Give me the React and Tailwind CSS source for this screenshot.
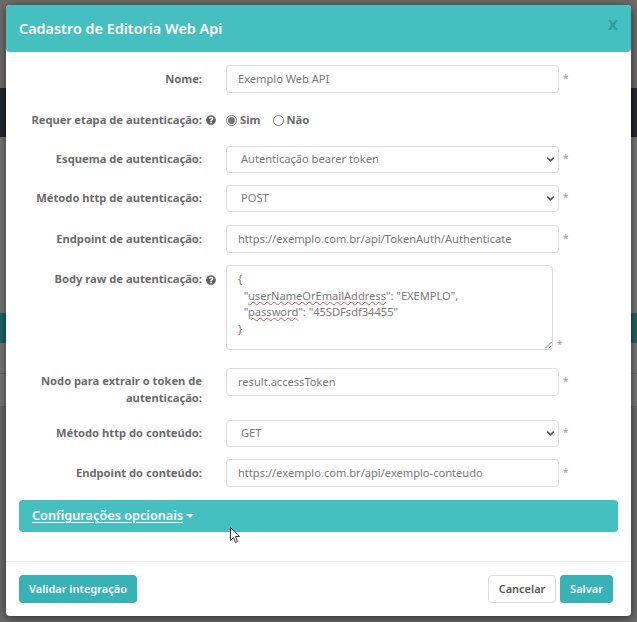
import { ChevronDown } from 'lucide-react';

const labelClass = 'w-[196px] shrink-0 text-right text-[11.2px] leading-[16.5px] font-bold text-[#6a6a6a]';
const fieldClass = 'h-[28px] w-[333px] rounded-[4px] border border-[#dcdcdc] bg-white text-[11.1px] text-[#777777] flex items-center';

function Help() {
  return (
    <svg className="w-[10px] h-[10px] shrink-0" viewBox="0 0 512 512" fill="#5f5f5f">
      <path d="M504 256c0 137-111 248-248 248S8 393 8 256 119 8 256 8s248 111 248 248zM262.700 90c-54.500 0-89.300 23-116.600 63.800-3.500 5.300-2.400 12.400 2.700 16.300l34.700 26.300c5.200 3.900 12.600 3 16.700-2.100 17.900-22.700 30.100-35.800 57.300-35.800 20.400 0 45.700 13.100 45.700 32.900 0 15-12.400 22.700-32.500 34C247.100 238.500 216 254.900 216 296v4c0 6.600 5.400 12 12 12h56c6.600 0 12-5.400 12-12v-1.300c0-28.500 83.200-29.700 83.200-106.700 0-58-60.200-102-116.500-102zM256 338c-25.400 0-46 20.600-46 46 0 25.400 20.600 46 46 46s46-20.600 46-46c0-25.400-20.600-46-46-46z" />
    </svg>
  );
}

function Star({ className = '' }) {
  return <span className={`text-[10px] leading-none text-[#999999] ml-[4px] mb-[3px] ${className}`}>*</span>;
}

function Row({ label, help, children, className = '' }) {
  return (
    <div className={`flex items-center ${className}`}>
      <div className={labelClass}>{label}</div>
      <div className="w-[24px] shrink-0 pl-[4px]">{help && <Help />}</div>
      {children}
    </div>
  );
}

function TextField({ value }) {
  return (
    <div className="flex items-center">
      <div className={`${fieldClass} pl-[11px]`}>{value}</div>
      <Star />
    </div>
  );
}

function SelectField({ value }) {
  return (
    <div className="flex items-center">
      <div className={`${fieldClass} !h-[27px] pl-[14px] pr-[2px] justify-between`}>
        <span>{value}</span>
        <ChevronDown size={11} strokeWidth={3.5} color="#555555" />
      </div>
      <Star />
    </div>
  );
}

function Squiggle({ children }) {
  return <span className="underline decoration-wavy decoration-[#d9534f] decoration-1 underline-offset-1">{children}</span>;
}

export default function App() {
  return (
    <div className="relative h-[622px] w-[637px] overflow-hidden bg-[#757575] font-['Noto_Sans','Open_Sans',sans-serif]">
      {/* page behind the backdrop */}
      <div className="flex flex-col">
        <div className="h-[88px] bg-[#6e6b6b]" />
        <div className="h-[49px] bg-[#23282c]" />
        <div className="h-[176px] bg-[#767676]" />
        <div className="h-[30px] bg-[#1c6460]" />
        <div className="h-[30px] bg-[#767676]" />
        <div className="h-[34px] border-y border-[#666666] bg-[#767676]" />
        <div className="h-[215px] bg-[#6a6a6a]" />
      </div>

      {/* modal */}
      <div className="absolute left-[6px] top-[5px] w-[625px] h-[611px] flex flex-col rounded-[4px] bg-white shadow-[0_2px_10px_rgba(0,0,0,0.55)]">
        <div className="relative h-[47px] shrink-0 rounded-[4px] bg-[#45bfc0] pl-[13px] flex items-center">
          <h1 className="text-[14.4px] font-semibold text-white">Cadastro de Editoria Web Api</h1>
          <span className="absolute right-[13px] top-[9px] text-[15px] leading-[20px] font-bold text-[#2f9a9c]">X</span>
        </div>

        <div className="flex flex-col flex-1 pt-[13px]">
          <Row label="Nome:">
            <TextField value="Exemplo Web API" />
          </Row>

          <Row label="Requer etapa de autenticação:" help className="mt-[20px] h-[14px]">
            <div className="flex items-center text-[11.2px] font-bold text-[#6a6a6a]">
              <span className="flex h-[11px] w-[11px] items-center justify-center rounded-full border border-[#777777]">
                <span className="h-[7px] w-[7px] rounded-full bg-[#777777]" />
              </span>
              <span className="ml-[3px]">Sim</span>
              <span className="ml-[13px] h-[11px] w-[11px] rounded-full border border-[#777777]" />
              <span className="ml-[2px]">Não</span>
            </div>
          </Row>

          <Row label="Esquema de autenticação:" className="mt-[19px]">
            <SelectField value="Autenticação bearer token" />
          </Row>
          <Row label="Método http de autenticação:" className="mt-[12px]">
            <SelectField value="POST" />
          </Row>
          <Row label="Endpoint de autenticação:" className="mt-[13px]">
            <TextField value="https://exemplo.com.br/api/TokenAuth/Authenticate" />
          </Row>

          <div className="mt-[12px] flex items-start">
            <div className={`${labelClass} pt-[6px]`}>Body raw de autenticação:</div>
            <div className="w-[24px] shrink-0 pl-[4px] pt-[10px]"><Help /></div>
            <div className="flex items-end">
              <div className="relative h-[85px] w-[327px] rounded-[4px] border border-[#dcdcdc] pl-[11px] pt-[5px] text-[11.1px] leading-[16.5px] text-[#777777] whitespace-pre">
                <div>{'{'}</div>
                <div>{'  "'}<Squiggle>userNameOrEmailAddress</Squiggle>{'": "EXEMPLO",'}</div>
                <div>{'  "'}<Squiggle>password</Squiggle>{'": "45SDFsdf34455"'}</div>
                <div>{'}'}</div>
                <svg className="absolute right-0 bottom-0 h-[8px] w-[8px]" viewBox="0 0 8 8" stroke="#777777" fill="none">
                  <path d="M1 7.500 7.500 1M4.500 7.500 7.500 4.500" />
                </svg>
              </div>
              <Star className="!mb-[1px]" />
            </div>
          </div>

          <div className="mt-[18px] flex items-start">
            <div className={`${labelClass} pt-[5px]`}>Nodo para extrair o token de autenticação:</div>
            <div className="w-[24px] shrink-0" />
            <TextField value="result.accessToken" />
          </div>
          <Row label="Método http do conteúdo:" className="mt-[14px]">
            <SelectField value="GET" />
          </Row>
          <Row label="Endpoint do conteúdo:" className="mt-[12px]">
            <TextField value="https://exemplo.com.br/api/exemplo-conteudo" />
          </Row>

          <div className="mx-[13px] mt-[13px] flex h-[32px] items-center rounded-[4px] bg-[#45bfc0] pl-[13px] text-[12.7px] font-semibold text-white">
            <span className="underline underline-offset-2">Configurações opcionais </span>
            <span className="ml-[3px] h-0 w-0 border-x-[4px] border-t-[4px] border-x-transparent border-t-white" />
          </div>

          <div className="mt-auto flex h-[55px] items-center justify-between border-t border-[#f0f0f0] pl-[13px] pr-[18px] text-[11px] font-semibold">
            <button className="h-[28px] w-[118px] rounded-[4px] bg-[#37b3b8] text-white">Validar integração</button>
            <div className="flex gap-[4px]">
              <button className="h-[28px] w-[68px] rounded-[4px] border border-[#dddddd] bg-white text-[#555555]">Cancelar</button>
              <button className="h-[28px] w-[53px] rounded-[4px] bg-[#37b3b8] text-white">Salvar</button>
            </div>
          </div>
        </div>
      </div>

      {/* mouse cursor */}
      <svg className="absolute left-[230px] top-[527px] h-[17px] w-[12px]" viewBox="0 0 12 17">
        <path d="M0.500 0.500v13l3-3 2 5 2-1-2-5h4z" fill="#ffffff" stroke="#333333" />
      </svg>
    </div>
  );
}
